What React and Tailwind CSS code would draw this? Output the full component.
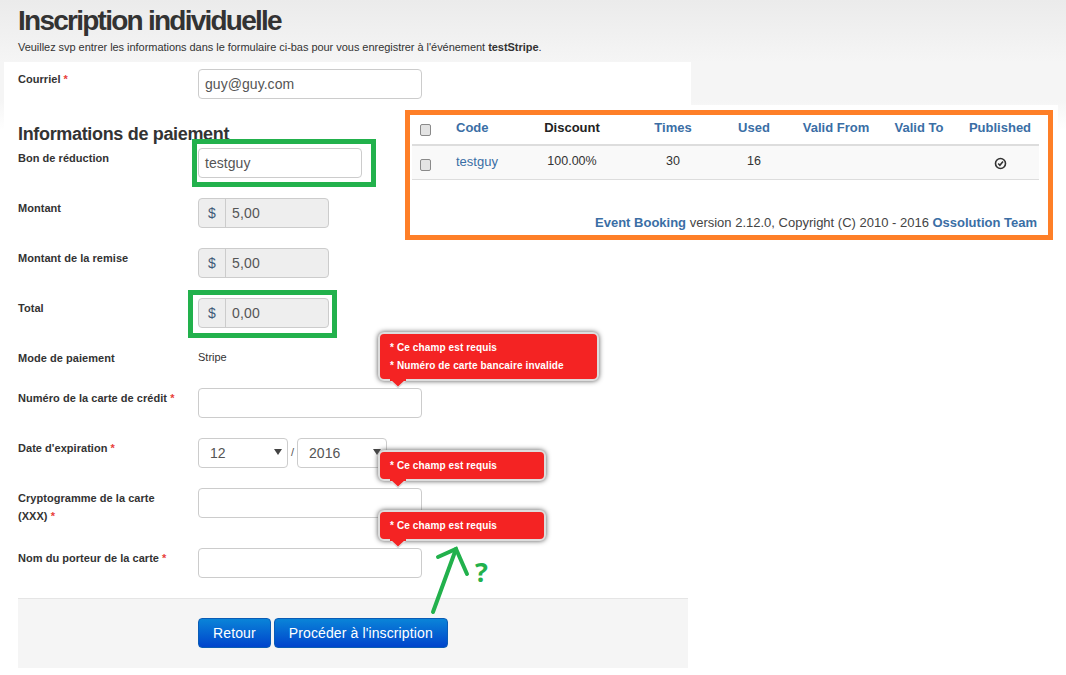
import React from "react";

const labelCls = "w-[180px] shrink-0 text-[11px] leading-[18px] font-bold text-[#333] tracking-[0.04px]";
const inputCls = "h-[30px] bg-white border border-[#ccc] rounded-[4px] px-[6px] text-[14px] leading-[28px] text-[#555] tracking-[0.05px]";

const Star = () => <span className="text-[#e8403a]"> *</span>;

const Row = ({ label, className = "h-[50px]", children }) => (
  <div className={`flex ${className}`}>
    <div className={`${labelCls} pt-[1px]`}>{label}</div>
    {children}
  </div>
);

const Money = ({ value }) => (
  <div className="h-[30px] w-[131px] flex bg-[#eee] border border-[#ccc] rounded-[4px] text-[14px] leading-[28px] text-[#555]">
    <span className="w-[27px] border-r border-[#ccc] text-center text-[#3f5a78]">$</span>
    <span className="pl-[6px] tracking-[0.2px]">{value}</span>
  </div>
);

const Select = ({ value, width }) => (
  <div className={`${width} ${inputCls} relative pl-[11px]`}>
    {value}
    <span className="absolute right-[5px] top-[10px] w-0 h-0 border-x-[4px] border-x-transparent border-t-[6px] border-t-[#444]" />
  </div>
);

const Tip = ({ className, lines }) => (
  <div className={`absolute left-[378px] bg-[#f42323] border-2 border-[#ddd] rounded-[6px] shadow-[0_0_5px_#555] text-white text-[10px] font-bold leading-[18px] tracking-[0.12px] pl-[10px] pt-[5px] ${className}`}>
    {lines.map((l) => (
      <div key={l}>* {l}</div>
    ))}
    <svg className="absolute left-[1px] -bottom-[9px]" width="34" height="10" viewBox="0 0 34 10">
      <path d="M9 2 L17 9.5 L25 2" fill="#f42323" stroke="#ddd" strokeWidth="1.6" />
      <rect x="9" y="0" width="16" height="3" fill="#f42323" />
    </svg>
  </div>
);

const Th = ({ w, children, dark }) => (
  <div className={`${w} text-center text-[13px] font-bold -mt-[4px] ${dark ? "text-[#222]" : "text-[#3a6ea5]"}`}>{children}</div>
);

const CheckBox = () => (
  <span className="block w-[11px] h-[12px] rounded-[2px] bg-[#e3e3e3] border border-[#8a8a8a]" />
);

const DiscountTable = () => (
  <div className="absolute left-[405px] top-[110px] w-[648px] h-[130px] bg-white border-[5px] border-[#fe7f28] outline-[5px] outline-white pl-[2px]">
    <div className="w-[627px]">
      <div className="h-[31px] flex items-center border-b-2 border-[#ddd]">
        <div className="w-[44px] pl-[8px] pt-[1px]"><CheckBox /></div>
        <div className="w-[68px] text-[13px] font-bold text-[#3a6ea5] -mt-[4px]">Code</div>
        <Th w="w-[96px]" dark>Discount</Th>
        <Th w="w-[106px]">Times</Th>
        <Th w="w-[56px]">Used</Th>
        <Th w="w-[108px]">Valid From</Th>
        <Th w="w-[58px]">Valid To</Th>
        <Th w="w-[78px] ml-[13px]">Published</Th>
      </div>
      <div className="h-[34px] flex items-center bg-[#f9f9f9] border-b border-[#ddd] text-[12.5px] text-[#333]">
        <div className="w-[44px] pl-[8px] pt-[5px]"><CheckBox /></div>
        <div className="w-[68px] text-[13px] text-[#3a6ea5] -mt-[2px]">testguy</div>
        <div className="w-[96px] text-center -mt-[2px]">100.00%</div>
        <div className="w-[106px] text-center -mt-[2px]">30</div>
        <div className="w-[56px] text-center -mt-[2px]">16</div>
        <div className="w-[179px]" />
        <div className="w-[78px] flex justify-center pt-[1px]">
          <svg width="13" height="13" viewBox="0 0 13 13" fill="none" stroke="#333">
            <circle cx="6.5" cy="6.5" r="5" strokeWidth="1.6" />
            <path d="M4.2 6.5 L5.9 8.2 L9 4.6" strokeWidth="1.6" />
          </svg>
        </div>
      </div>
    </div>
    <div className="w-[625px] mt-[35px] text-right text-[13px] leading-[15px] text-[#444]">
      <b className="text-[#3a6ea5]">Event Booking</b> version 2.12.0, Copyright (C) 2010 - 2016{" "}
      <b className="text-[#3a6ea5]">Ossolution Team</b>
    </div>
  </div>
);

export default function App() {
  return (
    <div className="relative w-[1066px] h-[675px] overflow-hidden bg-[linear-gradient(#ebebeb_0px,#f5f5f5_62px,#f5f5f5_100px,#ffffff_130px)] font-['Liberation_Sans',sans-serif]">
      <div className="pl-[18px] h-[62px]">
        <h1 className="text-[28px] leading-[42px] font-bold text-[#333] tracking-[-1.75px]">Inscription individuelle</h1>
        <p className="text-[11px] leading-[14px] mt-[-2px] text-[#333] tracking-[-0.04px]">
          Veuillez svp entrer les informations dans le formulaire ci-bas pour vous enregistrer à l'événement <b>testStripe</b>.
        </p>
      </div>

      <div className="ml-[4px] w-[687px] h-[613px] bg-white pl-[14px] pt-[7px]">
        <Row label={<>Courriel <Star /></>} className="h-[52px]">
          <div className={`${inputCls} w-[224px]`}>guy@guy.com</div>
        </Row>
        <h2 className="text-[18px] leading-[26px] font-bold text-[#333] tracking-[-0.33px] mb-[1px]">Informations de paiement</h2>
        <Row label="Bon de réduction">
          <div className={`${inputCls} w-[164px]`}>testguy</div>
        </Row>
        <Row label="Montant"><Money value="5,00" /></Row>
        <Row label="Montant de la remise"><Money value="5,00" /></Row>
        <Row label="Total"><Money value="0,00" /></Row>
        <Row label="Mode de paiement" className="h-[40px]">
          <div className="text-[11px] leading-[18px] text-[#333]">Stripe</div>
        </Row>
        <Row label={<>Numéro de la carte de crédit <Star /></>}>
          <div className={`${inputCls} w-[224px]`} />
        </Row>
        <Row label={<>Date d'expiration <Star /></>}>
          <div className="flex">
            <Select value="12" width="w-[90px]" />
            <span className="w-[9px] text-center text-[11px] leading-[28px] text-[#555]">/</span>
            <Select value="2016" width="w-[90px]" />
          </div>
        </Row>
        <Row label={<>Cryptogramme de la carte<br />(XXX) <Star /></>} className="h-[60px]">
          <div className={`${inputCls} w-[224px]`} />
        </Row>
        <Row label={<>Nom du porteur de la carte <Star /></>}>
          <div className={`${inputCls} w-[224px]`} />
        </Row>
        <div className="w-[670px] h-[70px] bg-[#f5f5f5] border-t border-[#e5e5e5] pl-[180px] pt-[19px] flex gap-[3px] items-start">
          <button className="h-[30px] px-[14px] rounded-[4px] border border-[#0a5cb5] bg-[linear-gradient(#0a84d8,#0044cc)] text-white text-[14px] tracking-[0.12px]">Retour</button>
          <button className="h-[30px] px-[14px] rounded-[4px] border border-[#0a5cb5] bg-[linear-gradient(#0a84d8,#0044cc)] text-white text-[14px] tracking-[0.12px]">Procéder à l'inscription</button>
        </div>
      </div>

      {/* annotations pasted on the screenshot */}
      <div className="absolute left-[192px] top-[139px] w-[184px] h-[48px] border-[5px] border-[#22b14c]" />
      <div className="absolute left-[188px] top-[290px] w-[149px] h-[48px] border-[5px] border-[#22b14c]" />
      <DiscountTable />

      <Tip className="top-[332px] h-[49px] w-[221px]" lines={["Ce champ est requis", "Numéro de carte bancaire invalide"]} />
      <Tip className="top-[450px] h-[31px] w-[168px]" lines={["Ce champ est requis"]} />
      <Tip className="top-[510px] h-[31px] w-[168px]" lines={["Ce champ est requis"]} />

      <svg className="absolute left-[425px] top-[540px]" width="50" height="76" viewBox="0 0 50 76" fill="none" stroke="#22b14c" strokeWidth="4" strokeLinecap="round">
        <path d="M8 72 L31 9" />
        <path d="M13 17 L31 9 L42 34" />
      </svg>
      <span className="absolute left-[475px] top-[555px] text-[27px] leading-[34px] text-[#22b14c] font-bold font-['Open_Sans',sans-serif]">?</span>
    </div>
  );
}
